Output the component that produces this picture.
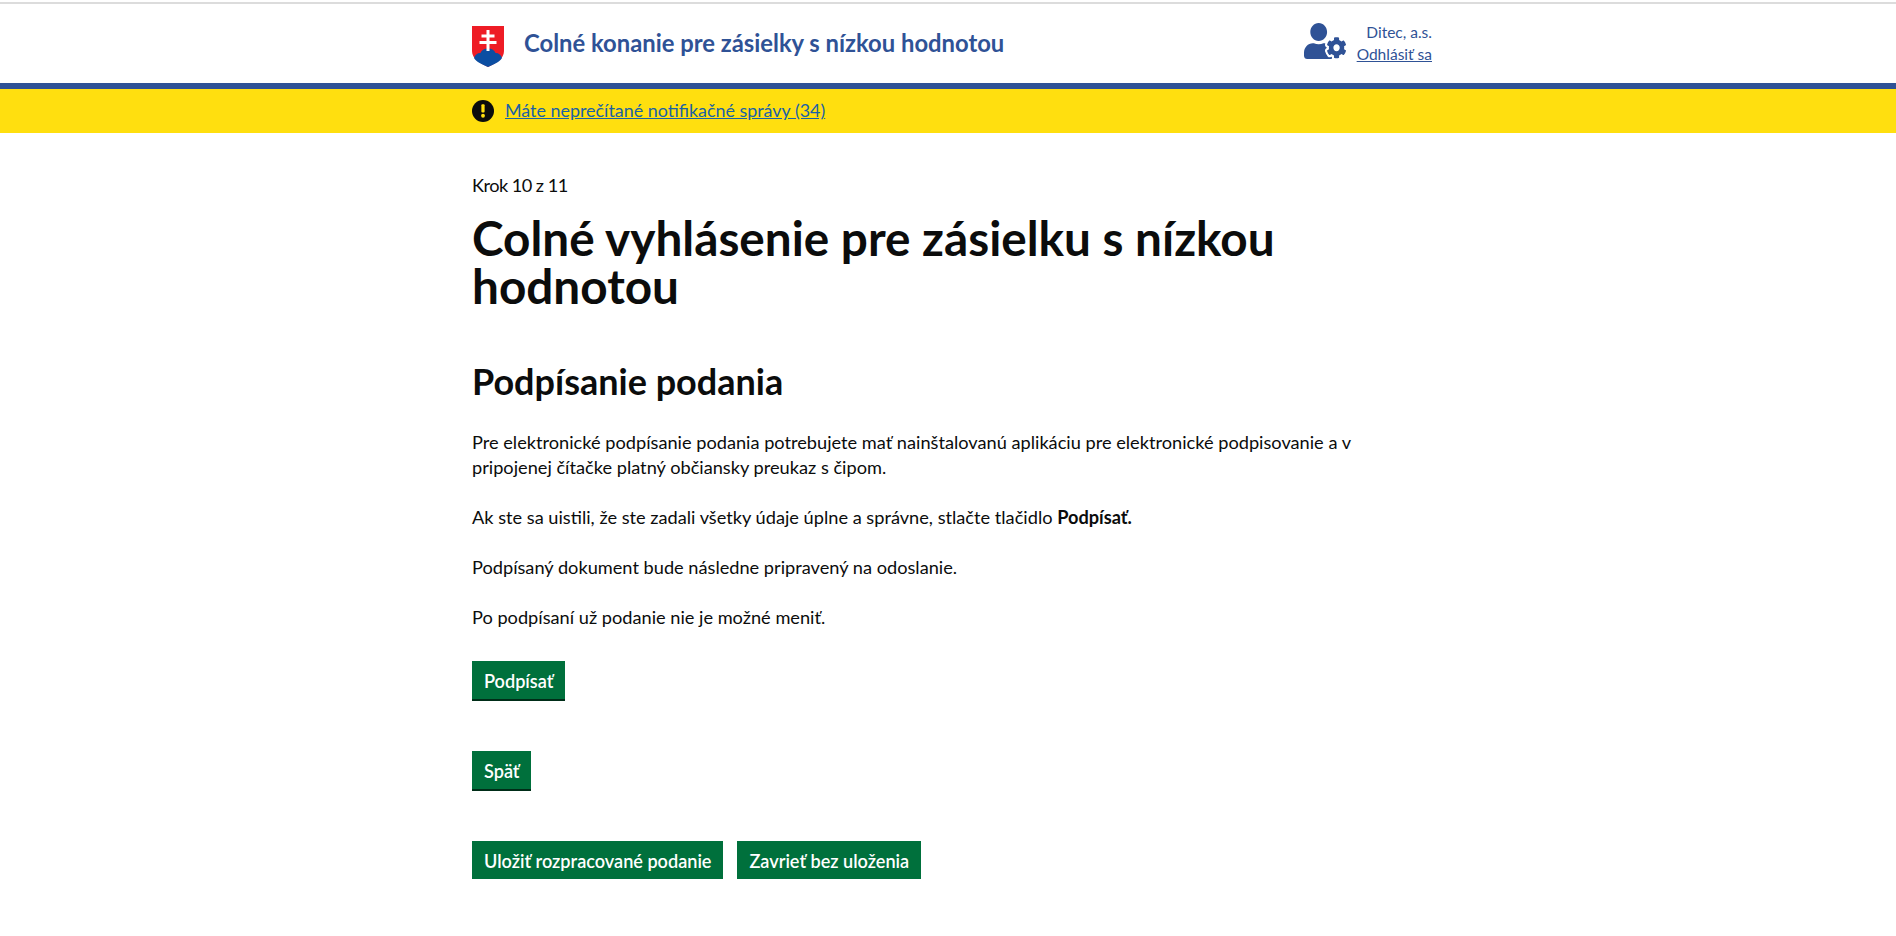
<script>
  const paragraphs = [
    'Pre elektronické podpísanie podania potrebujete mať nainštalovanú aplikáciu pre elektronické podpisovanie a v pripojenej čítačke platný občiansky preukaz s čipom.',
  ];
</script>

<div class="topline"></div>
<header class="header">
  <div class="wrap head-row">
    <div class="brand">
      <svg class="crest" width="32" height="41" viewBox="0 0 32 41" aria-hidden="true">
        <path d="M0 0h32v25c0 8-8 12-16 16C8 37 0 33 0 25z" fill="#ee1c25"/>
        <path d="M2 32c1-3 3-5 6.500-5 .8-2.500 3.500-4.500 7.500-4.500s6.700 2 7.500 4.500c3.500 0 5.500 2 6.500 5-2.500 4-8 6.500-14 9-6-2.500-11.500-5-14-9z" fill="#0b4ea2"/>
        <path d="M14.500 4h3v4.500h5v3h-5v3.500h7v3h-7v7h-3v-7h-7v-3h7v-3.500h-5v-3h5z" fill="#fff"/>
      </svg>
      <span class="title">Colné konanie pre zásielky s nízkou hodnotou</span>
    </div>
    <div class="user">
      <svg class="user-icon" width="42" height="36" viewBox="0 0 640 512" preserveAspectRatio="none" aria-hidden="true">
        <path fill="#2f5296" d="M610.5 373.3c2.6-14.1 2.6-28.5 0-42.6l25.8-14.9c3-1.7 4.3-5.2 3.3-8.5-6.7-21.6-18.2-41.2-33.2-57.4-2.3-2.5-6-3.1-9-1.4l-25.8 14.9c-10.9-9.3-23.4-16.5-36.9-21.3v-29.8c0-3.4-2.4-6.4-5.7-7.1-22.3-5-45-4.8-66.2 0-3.3.7-5.7 3.7-5.7 7.1v29.8c-13.5 4.8-26 12-36.9 21.3l-25.8-14.9c-2.9-1.7-6.7-1.1-9 1.4-15 16.2-26.5 35.8-33.2 57.4-1 3.3.4 6.8 3.3 8.5l25.8 14.9c-2.6 14.1-2.6 28.5 0 42.6l-25.8 14.9c-3 1.7-4.3 5.2-3.3 8.5 6.7 21.6 18.2 41.1 33.2 57.4 2.3 2.5 6 3.1 9 1.4l25.8-14.9c10.9 9.3 23.4 16.5 36.9 21.3v29.8c0 3.4 2.4 6.4 5.7 7.1 22.3 5 45 4.8 66.2 0 3.3-.7 5.7-3.7 5.7-7.1v-29.8c13.5-4.8 26-12 36.9-21.3l25.8 14.9c2.9 1.7 6.7 1.1 9-1.4 15-16.2 26.5-35.8 33.2-57.4 1-3.3-.4-6.8-3.3-8.5l-25.8-14.9zM496 400.500c-26.8 0-48.500-21.800-48.500-48.500s21.800-48.500 48.500-48.500 48.500 21.800 48.500 48.500-21.700 48.500-48.500 48.500zM224 256c70.700 0 128-57.300 128-128S294.700 0 224 0 96 57.300 96 128s57.300 128 128 128zm201.200 226.500c-2.300-1.200-4.600-2.600-6.800-3.900l-7.900 4.600c-6 3.400-12.800 5.300-19.600 5.300-10.900 0-21.400-4.600-28.900-12.600-18.300-19.800-32.300-43.900-40.200-69.600-5.500-17.700 1.900-36.400 17.900-45.700l7.900-4.600c-.1-2.600-.1-5.200 0-7.800l-7.900-4.600c-16-9.200-23.400-28-17.900-45.700.9-2.900 2.200-5.800 3.200-8.700-3.800-.3-7.500-1.200-11.400-1.200h-16.700c-22.200 10.200-46.900 16-72.900 16s-50.600-5.800-72.900-16h-16.700C60.200 288 0 348.200 0 422.400V464c0 26.500 21.500 48 48 48h352c10.100 0 19.500-3.200 27.200-8.500-1.200-3.800-2-7.700-2-11.800v-9.200z"/>
      </svg>
      <div class="user-text">
        <div>Ditec, a.s.</div>
        <a href="#logout">Odhlásiť sa</a>
      </div>
    </div>
  </div>
</header>

<div class="notice">
  <div class="wrap notice-row">
    <svg width="22" height="22" viewBox="0 0 23 23" aria-hidden="true">
      <circle cx="11.500" cy="11.500" r="11.500" fill="#0b0c0c"/>
      <rect x="9.800" y="4.500" width="3.400" height="8.500" rx="1" fill="#ffdf0f"/>
      <circle cx="11.500" cy="16.500" r="2" fill="#ffdf0f"/>
    </svg>
    <a href="#msgs">Máte neprečítané notifikačné správy (34)</a>
  </div>
</div>

<main class="wrap main">
  <div class="step">Krok 10 z 11</div>
  <h1>Colné vyhlásenie pre zásielku s nízkou hodnotou</h1>
  <h2>Podpísanie podania</h2>
  <p>{paragraphs[0]}</p>
  <p>Ak ste sa uistili, že ste zadali všetky údaje úplne a správne, stlačte tlačidlo <b>Podpísať.</b></p>
  <p>Podpísaný dokument bude následne pripravený na odoslanie.</p>
  <p>Po podpísaní už podanie nie je možné meniť.</p>
  <div class="btn-row first"><button>Podpísať</button></div>
  <div class="btn-row"><button>Späť</button></div>
  <div class="btn-row"><button>Uložiť rozpracované podanie</button><button>Zavrieť bez uloženia</button></div>
</main>

<style>
  :global(body) {
    margin: 0;
    background: #fff;
    color: #0b0c0c;
    font-family: "Lato", "Noto Sans", sans-serif;
    font-size: 18.2px;
    overflow: hidden;
  }
  .wrap { width: 960px; margin-left: 472px; }
  .topline { height: 2px; margin-top: 2px; background: #dcdcdc; }
  .header { height: 79px; }
  .head-row { display: flex; align-items: center; justify-content: space-between; height: 79px; }
  .brand { display: flex; align-items: center; gap: 20px; }
  .crest { margin-top: 6px; }
  .title { color: #2f5296; font-size: 23.8px; font-weight: 700; padding-bottom: 2px; }
  .user { display: flex; align-items: center; gap: 11px; color: #2f5296; font-size: 15.500px; }
  .user-text { text-align: right; line-height: 22px; padding-bottom: 2px; }
  .user-text a { color: #2f5296; }
  .user-icon { margin-bottom: 5px; }
  .notice {
    height: 44px;
    background: #ffdf0f;
    border-top: 6px solid #2f5296;
  }
  .notice-row { display: flex; align-items: center; gap: 11px; height: 44px; }
  .notice a { color: #1a62a6; font-size: 17.900px; padding-bottom: 2px; }
  .main { padding-top: 40px; }
  .step { line-height: 25px; letter-spacing: -0.55px; }
  h1 { margin: 16px 0 0; font-size: 47.700px; line-height: 48px; font-weight: 700; width: 840px; }
  h2 { margin: 51px 0 0; font-size: 36px; line-height: 40px; font-weight: 700; }
  p { margin: 25px 0 0; line-height: 25px; width: 910px; }
  h2 + p { margin-top: 29px; }
  .btn-row { display: flex; gap: 14px; margin-top: 52px; }
  .btn-row.first { margin-top: 31px; }
  button {
    border: 0;
    background: #00703c;
    color: #fff;
    font: inherit;
    font-size: 18.100px;
    font-weight: 600;
    height: 38px;
    padding: 1px 12px 0;
    box-shadow: 0 2px 0 #002d18;
  }
</style>
